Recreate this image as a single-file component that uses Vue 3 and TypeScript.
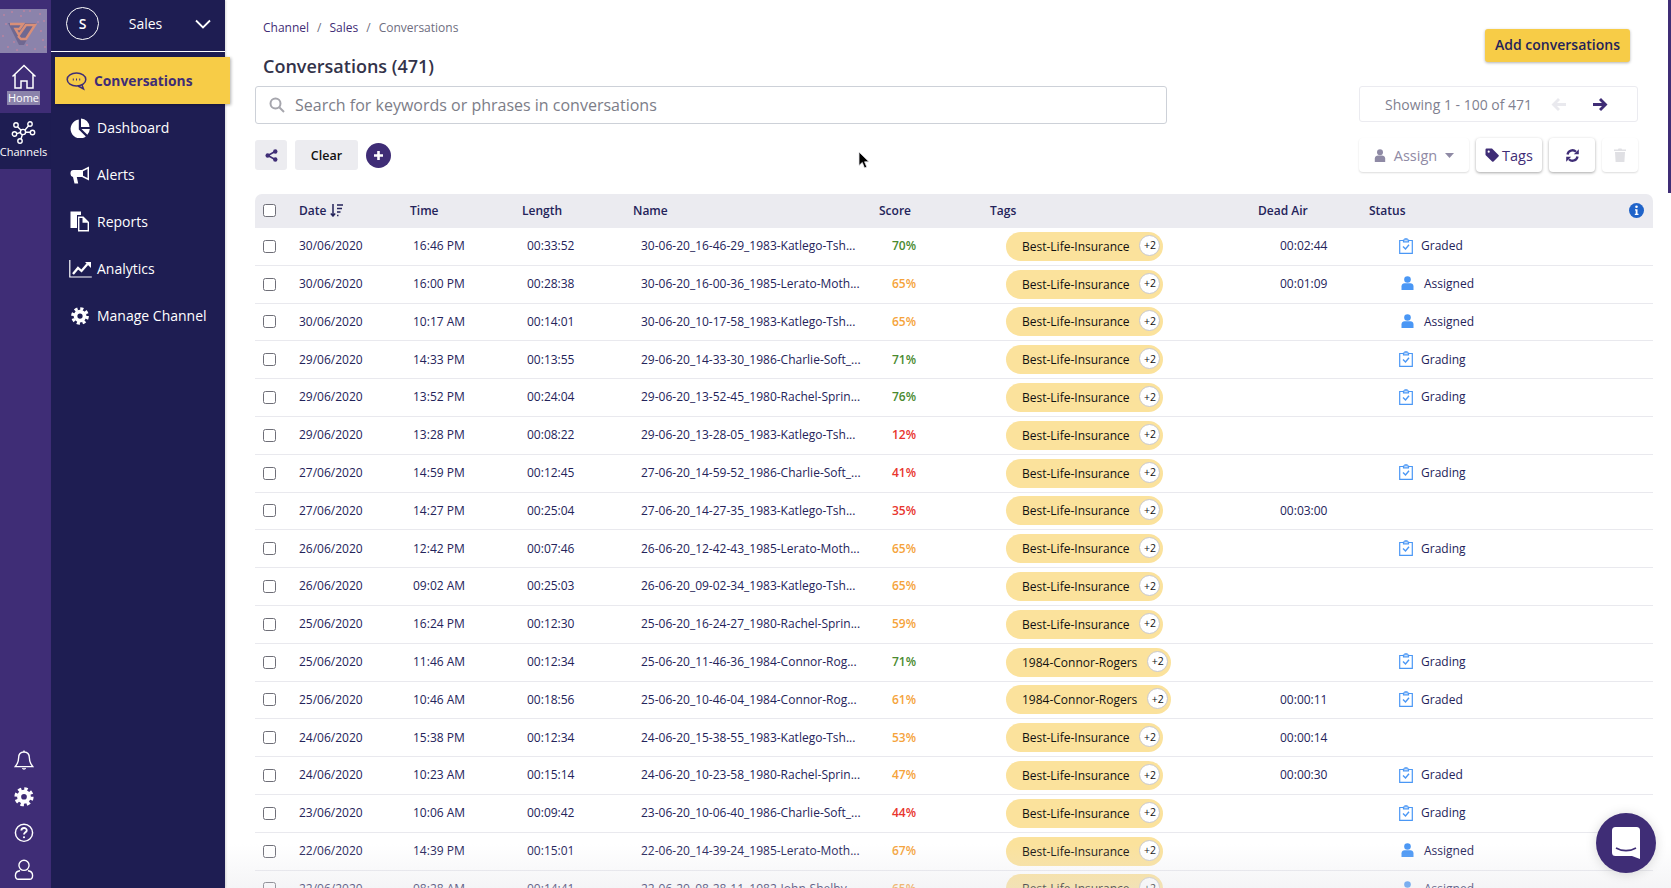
<script setup lang="ts">
type Row = {
  date: string;
  time: string;
  length: string;
  name: string;
  score: number;
  tag: string;
  air: string;
  status: string;
};

const life = "Best-Life-Insurance";
const connor = "1984-Connor-Rogers";

const rows: Row[] = [
  { date: "30/06/2020", time: "16:46 PM", length: "00:33:52", name: "30-06-20_16-46-29_1983-Katlego-Tsh...", score: 70, tag: life, air: "00:02:44", status: "Graded" },
  { date: "30/06/2020", time: "16:00 PM", length: "00:28:38", name: "30-06-20_16-00-36_1985-Lerato-Moth...", score: 65, tag: life, air: "00:01:09", status: "Assigned" },
  { date: "30/06/2020", time: "10:17 AM", length: "00:14:01", name: "30-06-20_10-17-58_1983-Katlego-Tsh...", score: 65, tag: life, air: "", status: "Assigned" },
  { date: "29/06/2020", time: "14:33 PM", length: "00:13:55", name: "29-06-20_14-33-30_1986-Charlie-Soft_...", score: 71, tag: life, air: "", status: "Grading" },
  { date: "29/06/2020", time: "13:52 PM", length: "00:24:04", name: "29-06-20_13-52-45_1980-Rachel-Sprin...", score: 76, tag: life, air: "", status: "Grading" },
  { date: "29/06/2020", time: "13:28 PM", length: "00:08:22", name: "29-06-20_13-28-05_1983-Katlego-Tsh...", score: 12, tag: life, air: "", status: "" },
  { date: "27/06/2020", time: "14:59 PM", length: "00:12:45", name: "27-06-20_14-59-52_1986-Charlie-Soft_...", score: 41, tag: life, air: "", status: "Grading" },
  { date: "27/06/2020", time: "14:27 PM", length: "00:25:04", name: "27-06-20_14-27-35_1983-Katlego-Tsh...", score: 35, tag: life, air: "00:03:00", status: "" },
  { date: "26/06/2020", time: "12:42 PM", length: "00:07:46", name: "26-06-20_12-42-43_1985-Lerato-Moth...", score: 65, tag: life, air: "", status: "Grading" },
  { date: "26/06/2020", time: "09:02 AM", length: "00:25:03", name: "26-06-20_09-02-34_1983-Katlego-Tsh...", score: 65, tag: life, air: "", status: "" },
  { date: "25/06/2020", time: "16:24 PM", length: "00:12:30", name: "25-06-20_16-24-27_1980-Rachel-Sprin...", score: 59, tag: life, air: "", status: "" },
  { date: "25/06/2020", time: "11:46 AM", length: "00:12:34", name: "25-06-20_11-46-36_1984-Connor-Rog...", score: 71, tag: connor, air: "", status: "Grading" },
  { date: "25/06/2020", time: "10:46 AM", length: "00:18:56", name: "25-06-20_10-46-04_1984-Connor-Rog...", score: 61, tag: connor, air: "00:00:11", status: "Graded" },
  { date: "24/06/2020", time: "15:38 PM", length: "00:12:34", name: "24-06-20_15-38-55_1983-Katlego-Tsh...", score: 53, tag: life, air: "00:00:14", status: "" },
  { date: "24/06/2020", time: "10:23 AM", length: "00:15:14", name: "24-06-20_10-23-58_1980-Rachel-Sprin...", score: 47, tag: life, air: "00:00:30", status: "Graded" },
  { date: "23/06/2020", time: "10:06 AM", length: "00:09:42", name: "23-06-20_10-06-40_1986-Charlie-Soft_...", score: 44, tag: life, air: "", status: "Grading" },
  { date: "22/06/2020", time: "14:39 PM", length: "00:15:01", name: "22-06-20_14-39-24_1985-Lerato-Moth...", score: 67, tag: life, air: "", status: "Assigned" },
  { date: "22/06/2020", time: "08:28 AM", length: "00:14:41", name: "22-06-20_08-28-11_1982-John-Shelby...", score: 65, tag: life, air: "", status: "Assigned" },
];

const scoreClass = (score: number) => {
  if (score >= 70) return "good";
  if (score >= 45) return "mid";
  return "bad";
};

const navItems = ["Dashboard", "Alerts", "Reports", "Analytics", "Manage Channel"];

// the logo in the picture is speckled, a handful of dots is enough
const logoDots = [
  [4, 6], [12, 3], [21, 7], [30, 2], [40, 5], [44, 12], [6, 15], [3, 27], [8, 38],
  [17, 41], [27, 36], [35, 40], [43, 31], [41, 22], [14, 33], [38, 13], [24, 2], [45, 38],
];
</script>

<template>
  <div class="page">
    <aside class="rail">
      <div class="logo">
        <svg width="47" height="44" viewBox="0 0 47 44" fill="none">
          <circle v-for="(dot, i) in logoDots" :key="i" :cx="dot[0]" :cy="dot[1]" r="0.8" fill="#d9859a" />
          <path d="M8 14h28L24 36h-5Z" fill="#6f6891" />
          <path d="M10 15h13l-3.500 5h-4l3.500 6 7-10h9l-9 14h-5l-3-3" stroke="#d98f78" stroke-width="2.400" />
        </svg>
      </div>
      <div class="tab">
        <svg width="26" height="26" viewBox="0 0 26 26" fill="none" stroke="#fff" stroke-width="1.500">
          <path d="M1.500 12.500 13 1.500l11.500 11M4 10.500v13.500h6v-7h6v7h6V10.500" />
        </svg>
        <span class="home-label">Home</span>
      </div>
      <div class="tab active">
        <svg width="25" height="23" viewBox="0 0 25 23" fill="none" stroke="#fff" stroke-width="1.400">
          <circle cx="12" cy="11" r="2.600" />
          <circle cx="5" cy="4" r="2.200" />
          <circle cx="3.500" cy="13" r="2.200" />
          <circle cx="9" cy="20" r="2.200" />
          <circle cx="19" cy="3" r="2.200" />
          <circle cx="21.500" cy="11.500" r="2.200" />
          <path d="m6.500 5.700 3.600 3.500M5.700 12.700l3.700-1.200M10 18l1.300-4.300M14 9l3.600-4.300M14.600 11.200h4.700" />
        </svg>
        <span>Channels</span>
      </div>
      <div class="rail-bottom">
        <svg width="20" height="22" viewBox="0 0 20 22" fill="none" stroke="#fff" stroke-width="1.400">
          <path d="M10 2c-3.500 0-5.500 2.500-5.500 6 0 5-2 7-3.500 9h18c-1.500-2-3.500-4-3.500-9 0-3.500-2-6-5.500-6Z" />
          <path d="M8.500 18.500a1.600 1.600 0 0 0 3 0M10 .5V2" />
        </svg>
        <svg width="20" height="20" viewBox="0 0 24 24" fill="none" stroke="#fff">
          <circle cx="12" cy="12" r="6" stroke-width="5" />
          <circle cx="12" cy="12" r="9.800" stroke-width="4" stroke-dasharray="4.200 3.500" />
        </svg>
        <svg width="20" height="20" viewBox="0 0 20 20" fill="none" stroke="#fff" stroke-width="1.500">
          <circle cx="10" cy="10" r="8.800" />
          <path d="M7.300 7.800c0-3.500 5.500-3.500 5.500-.2 0 2-2.800 2-2.800 4.200" stroke-width="1.900" />
          <circle cx="10" cy="14.600" r="1.100" fill="#fff" stroke="none" />
        </svg>
        <svg width="20" height="22" viewBox="0 0 20 22" fill="none" stroke="#fff" stroke-width="1.400">
          <circle cx="10" cy="6.500" r="5.200" />
          <path d="M6 12c-3 .3-4.800 2.200-4.800 4.800 0 2.400 1 3.900 3 3.900h11.600c2 0 3-1.500 3-3.900 0-2.600-1.800-4.500-4.800-4.800" />
        </svg>
      </div>
    </aside>

    <nav class="sidenav">
      <div class="channel">
        <span class="avatar">S</span>
        <span class="channel-name">Sales</span>
        <svg width="16" height="10" viewBox="0 0 16 10" fill="none" stroke="#fff" stroke-width="1.800">
          <path d="m1 1.500 7 7 7-7" />
        </svg>
      </div>
      <div class="nav-active">
        <svg width="21" height="21" viewBox="0 0 21 21" fill="none" stroke="#3f2d76" stroke-width="1.500">
          <ellipse cx="10.500" cy="9.500" rx="9.300" ry="6.500" />
          <path d="m12 16 5.500 3-1.500-4" />
          <path d="M6.800 9.500h1M10 9.500h1M13.200 9.500h1" stroke-width="2" />
        </svg>
        <span>Conversations</span>
      </div>
      <div v-for="item in navItems" :key="item" class="nav-item">
        <span class="nav-icon">
          <svg v-if="item === 'Dashboard'" width="20" height="20" viewBox="0 0 20 20" fill="#fff">
            <path d="M8.800 1.500v10l7 7A9.500 9.500 0 1 1 8.800 1.500Z" />
            <path d="M11 .5A9 9 0 0 1 19.500 9H11Z" />
            <path d="M11.500 11H19.800a9 9 0 0 1-2.500 5.700Z" />
          </svg>
          <svg v-else-if="item === 'Alerts'" width="21" height="18" viewBox="0 0 21 18" fill="#fff">
            <path fill-rule="evenodd" d="M19 .5 12 4H3.500A3 3 0 0 0 .5 7v1A3 3 0 0 0 3 11l1.500 6.500h3.700L6.800 11H12l7 3.500v-14Zm-1.500 2.400v9.200L13 9.800V5.200Z" />
          </svg>
          <svg v-else-if="item === 'Reports'" width="20" height="21" viewBox="0 0 20 21" fill="#fff">
            <path d="M.5.5H11V4H7v13H.5Z" />
            <path d="M8 5.500h5.500L19 11v9.500H8Zm1.400 1.400v12.200h8.200v-7.400h-5.100V6.900Z" fill-rule="evenodd" />
          </svg>
          <svg v-else-if="item === 'Analytics'" width="23" height="18" viewBox="0 0 23 18" fill="none" stroke="#fff">
            <path d="M.8 0v17h22" stroke-width="1.200" />
            <path d="m4 14 5-6 3.500 3 6-7" stroke-width="2.300" />
            <path d="M16 2h6v6Z" fill="#fff" stroke="none" />
          </svg>
          <svg v-else width="18" height="18" viewBox="0 0 24 24" fill="none" stroke="#fff">
            <circle cx="12" cy="12" r="6" stroke-width="5" />
            <circle cx="12" cy="12" r="9.800" stroke-width="4" stroke-dasharray="4.200 3.500" />
          </svg>
        </span>
        <span>{{ item }}</span>
      </div>
    </nav>

    <main class="main">
      <div class="top">
        <div class="heading">
          <div class="crumbs">
            <span>Channel</span><i>/</i><span>Sales</span><i>/</i><em>Conversations</em>
          </div>
          <h1>Conversations (471)</h1>
        </div>
        <button class="add" type="button">Add conversations</button>
      </div>

      <div class="search-row">
        <div class="search">
          <svg width="16" height="16" viewBox="0 0 16 16" fill="none" stroke="#a6a6ad" stroke-width="2">
            <circle cx="6.500" cy="6.500" r="5" />
            <path d="m10.500 10.500 4.500 4.500" />
          </svg>
          <span>Search for keywords or phrases in conversations</span>
        </div>
        <div class="pager">
          <span>Showing 1 - 100 of 471</span>
          <svg width="15" height="13" viewBox="0 0 15 13" fill="#e9e9ee">
            <path d="M7 0 .5 6.500 7 13l2-2-3-3h9V5H6l3-3Z" />
          </svg>
          <svg width="15" height="13" viewBox="0 0 15 13" fill="#3f2d76">
            <path d="m8 0 6.500 6.500L8 13l-2-2 3-3H0V5h9L6 2Z" />
          </svg>
        </div>
      </div>

      <div class="actions">
        <button class="soft square" type="button">
          <svg width="13" height="13" viewBox="0 0 13 13" fill="#3f2d76" stroke="#3f2d76">
            <path d="m3 6.500 7-4M3 6.500l7 4" stroke-width="1.500" />
            <circle cx="2.700" cy="6.500" r="2.200" stroke="none" />
            <circle cx="10.300" cy="2.500" r="2.200" stroke="none" />
            <circle cx="10.300" cy="10.500" r="2.200" stroke="none" />
          </svg>
        </button>
        <button class="soft clear" type="button">Clear</button>
        <button class="plus" type="button">
          <svg width="11" height="11" viewBox="0 0 11 11" stroke="#fff" stroke-width="2.600">
            <path d="M5.500 1v9M1 5.500h9" />
          </svg>
        </button>
        <div class="tools">
          <button class="tool muted assign" type="button">
            <svg width="12" height="13" viewBox="0 0 12 13" fill="#8f8aa5">
              <circle cx="6" cy="3.300" r="3" />
              <path d="M.8 13V9.500C.8 7.500 2.500 6.500 4 6.500h4c1.500 0 3.200 1 3.200 3V13Z" />
            </svg>
            <span>Assign</span>
            <svg width="9" height="5" viewBox="0 0 9 5" fill="#8f8aa5"><path d="M0 0h9L4.500 5Z" /></svg>
          </button>
          <button class="tool tags" type="button">
            <svg width="14" height="14" viewBox="0 0 14 14" fill="#3f2d76">
              <path d="M.5 1.500a1 1 0 0 1 1-1H7L13.500 7a1 1 0 0 1 0 1.400l-5 5a1 1 0 0 1-1.400 0L.5 7Z" />
              <circle cx="3.700" cy="3.700" r="1.100" fill="#fff" />
            </svg>
            <span>Tags</span>
          </button>
          <button class="tool refresh" type="button">
            <svg width="13" height="13" viewBox="0 0 13 13" fill="none" stroke="#3f2d76" stroke-width="2.300">
              <path d="M1.500 5.500A5 5 0 0 1 10 2.800" />
              <path d="M11.500 7.500A5 5 0 0 1 3 10.200" />
              <path d="M12.800.3v5H7.800ZM.2 12.700v-5h5Z" fill="#3f2d76" stroke="none" />
            </svg>
          </button>
          <button class="tool muted trash" type="button">
            <svg width="12" height="14" viewBox="0 0 12 14" fill="#e0e0e4">
              <path d="M0 1.500h4L4.500.5h3l.5 1h4V3H0ZM1 4h10l-.6 10H1.600Z" />
            </svg>
          </button>
        </div>
      </div>

      <div class="grid head">
        <span class="check"><input type="checkbox" /></span>
        <span class="date-head">Date
          <svg width="13" height="13" viewBox="0 0 13 13" fill="none" stroke="#24235a" stroke-width="1.500">
            <path d="M3 0v12M.8 9.500 3 12l2.200-2.500M7 1h6M7 4.500h5M7 8h3.500M7 11.500h1.500" />
          </svg>
        </span>
        <span>Time</span>
        <span>Length</span>
        <span>Name</span>
        <span>Score</span>
        <span>Tags</span>
        <span>Dead Air</span>
        <span class="status-head">
          Status
          <svg width="15" height="15" viewBox="0 0 15 15">
            <circle cx="7.500" cy="7.500" r="7.500" fill="#1f63c9" />
            <circle cx="7.500" cy="3.800" r="1.300" fill="#fff" />
            <path d="M6 6.200h2.500v4.600h1v1.300H5.800v-1.300h.9V7.500H6Z" fill="#fff" />
          </svg>
        </span>
      </div>

      <div v-for="row in rows" :key="row.name" class="grid row">
        <span class="check"><input type="checkbox" /></span>
        <span>{{ row.date }}</span>
        <span class="c-time">{{ row.time }}</span>
        <span class="c-length">{{ row.length }}</span>
        <span class="c-name">{{ row.name }}</span>
        <span class="c-score" :class="scoreClass(row.score)">{{ row.score }}%</span>
        <span class="c-tag">
          <span class="pill">
            <span>{{ row.tag }}</span>
            <b>+2</b>
          </span>
        </span>
        <span class="c-air">{{ row.air }}</span>
        <span class="c-status">
          <template v-if="row.status === 'Assigned'">
            <svg class="assigned-icon" width="13" height="14" viewBox="0 0 13 14" fill="#4a97f5">
              <circle cx="6.500" cy="3.500" r="3.300" />
              <path d="M.5 14v-3.500C.5 8.300 2 7.300 3.500 7.300h6c1.500 0 3 1 3 3.200V14Z" />
            </svg>
            <span>Assigned</span>
          </template>
          <template v-else-if="row.status">
            <svg class="grade-icon" width="14" height="16" viewBox="0 0 14 16" fill="none" stroke="#4a97f5" stroke-width="1.200">
              <path d="M4 2.500H.7v12.800h12.600V2.500H10" />
              <path d="M4.500 3.800V2H6V.8h2V2h1.500v1.800Z" />
              <path d="m4 8.500 2.500 2.500L10 6.800" stroke-width="1.400" />
            </svg>
            <span>{{ row.status }}</span>
          </template>
        </span>
      </div>

      <div class="fade"></div>
      <div class="thumb"></div>
      <svg class="cursor" width="14" height="18" viewBox="0 0 14 18">
        <path d="M1 0v13.500l3.300-3 2.200 5.500 2.300-1-2.200-5.200H11Z" fill="#000" stroke="#e6e6ea" stroke-width=".8" />
      </svg>
      <div class="chat">
        <svg width="28" height="32" viewBox="0 0 28 32">
          <path d="M3.500 0h21A3.500 3.500 0 0 1 28 3.500V32l-8-3H3.500A3.500 3.500 0 0 1 0 25.500v-22A3.500 3.500 0 0 1 3.500 0Z" fill="#fff" />
          <path d="M4 21c6 3.500 14 3.500 20 0" fill="none" stroke="#3f2d76" stroke-width="1.600" />
        </svg>
      </div>
    </main>
  </div>
</template>

<style scoped>
.page {
  display: flex;
  height: 888px;
  overflow: hidden;
  font-family: "Open Sans", "Liberation Sans", sans-serif;
  color: #24235a;
}

.rail {
  width: 51px;
  flex: none;
  background: #3f2d76;
  color: #fff;
  display: flex;
  flex-direction: column;
  align-items: center;
  padding-top: 9px;
  box-sizing: border-box;
}

.logo {
  width: 47px;
  height: 44px;
  align-self: flex-start;
  background: #8b83ab;
}

.logo svg {
  display: block;
}

.tab {
  width: 100%;
  height: 60px;
  display: flex;
  flex-direction: column;
  align-items: center;
  justify-content: flex-end;
  font-size: 11px;
  line-height: 14px;
  padding: 0 4px 8px 0;
  box-sizing: border-box;
}

.tab.active {
  height: 56px;
  background: #1e1d52;
  padding-bottom: 10px;
  gap: 1px;
}

.home-label {
  background: #8b83ab;
  padding: 0 1px;
  margin-top: 1px;
}

.rail-bottom {
  margin-top: auto;
  height: 130px;
  display: flex;
  flex-direction: column;
  align-items: center;
  gap: 16px;
  padding: 0 4px 8px 0;
  box-sizing: content-box;
}

.sidenav {
  width: 174px;
  flex: none;
  background: #1e1d52;
  color: #fff;
  box-shadow: 1px 0 2px rgba(0, 0, 0, 0.15);
  z-index: 2;
}

.channel {
  height: 52px;
  border-bottom: 1px solid #fff;
  box-sizing: border-box;
  display: flex;
  align-items: center;
  padding: 0 14px 4px 15px;
}

.avatar {
  width: 33px;
  height: 33px;
  border: 1.5px solid #fff;
  border-radius: 50%;
  box-sizing: border-box;
  display: flex;
  align-items: center;
  justify-content: center;
  font-size: 14px;
  font-weight: 600;
}

.channel-name {
  flex: 1;
  text-align: center;
  font-size: 14px;
  padding-right: 3px;
}

.nav-active {
  width: 175px;
  height: 47px;
  margin: 5px 0 0 4px;
  background: #f7cc47;
  color: #3f2d76;
  font-size: 13.800px;
  font-weight: 700;
  display: flex;
  align-items: center;
  gap: 7px;
  padding-left: 11px;
  box-sizing: border-box;
  box-shadow: 1px 1px 3px rgba(0, 0, 0, 0.3);
  position: relative;
}

.nav-item {
  height: 47px;
  display: flex;
  align-items: center;
  font-size: 14px;
  padding-left: 17px;
}

.nav-icon {
  width: 24px;
  display: flex;
  justify-content: center;
  margin-right: 5px;
}

.main {
  flex: 1;
  min-width: 0;
  padding: 0 18px 0 30px;
  position: relative;
  background: #fff;
}

.top {
  height: 86px;
  display: flex;
  justify-content: space-between;
  align-items: flex-start;
}

.heading {
  padding: 19px 0 0 8px;
}

.crumbs {
  font-size: 12px;
  line-height: 18px;
  color: #3f2d76;
  display: flex;
}

.crumbs i {
  font-style: normal;
  margin: 0 8px;
  color: #6e6e80;
}

.crumbs em {
  font-style: normal;
  color: #6e6e80;
}

h1 {
  margin: 16px 0 0;
  font-size: 18px;
  line-height: 26px;
  font-weight: 600;
  color: #33334a;
}

button {
  font-family: inherit;
  border: none;
  cursor: pointer;
  padding: 0;
}

.add {
  width: 145px;
  height: 33px;
  margin: 29px 23px 0 0;
  padding-bottom: 2px;
  background: #f7cc47;
  color: #24235a;
  font-size: 14px;
  font-weight: 600;
  border-radius: 3px;
  box-shadow: 0 1px 3px rgba(0, 0, 0, 0.3);
}

.search-row {
  display: flex;
  justify-content: space-between;
  align-items: flex-start;
  padding-right: 15px;
}

.search {
  width: 912px;
  height: 38px;
  border: 1px solid #cdd1d8;
  border-radius: 3px;
  box-sizing: border-box;
  display: flex;
  align-items: center;
  gap: 10px;
  padding-left: 13px;
  font-size: 16px;
  color: #7c7d88;
}

.pager {
  width: 279px;
  height: 36px;
  border: 1px solid #ebebf0;
  border-radius: 3px;
  box-sizing: border-box;
  display: flex;
  align-items: center;
  padding-left: 25px;
  font-size: 14px;
  color: #7f7f90;
}

.pager svg:first-of-type {
  margin-left: 19px;
}

.pager svg:last-of-type {
  margin-left: 27px;
}

.actions {
  display: flex;
  align-items: center;
  margin-top: 14px;
  height: 34px;
  padding-right: 15px;
}

.soft {
  height: 30px;
  background: #ececf0;
  border-radius: 3px;
  color: #111;
  font-size: 12.500px;
  font-weight: 600;
  display: flex;
  align-items: center;
  justify-content: center;
}

.square {
  width: 32px;
}

.clear {
  width: 63px;
  margin-left: 8px;
}

.plus {
  width: 25px;
  height: 25px;
  border-radius: 50%;
  background: #3f2d76;
  margin-left: 8px;
  display: flex;
  align-items: center;
  justify-content: center;
}

.tools {
  margin-left: auto;
  display: flex;
  gap: 7px;
}

.tool {
  height: 34px;
  background: #fff;
  border-radius: 4px;
  box-shadow: 0 1px 3px rgba(0, 0, 0, 0.35);
  color: #3f2d76;
  font-size: 14.500px;
  display: flex;
  align-items: center;
  justify-content: center;
}

.tool.muted {
  box-shadow: 0 1px 2px rgba(0, 0, 0, 0.14);
  color: #8f8aa5;
}

.assign {
  width: 110px;
  gap: 8px;
}

.tags {
  width: 66px;
  gap: 3px;
}

.refresh {
  width: 46px;
}

.trash {
  width: 36px;
}

.grid {
  display: grid;
  grid-template-columns: 44px 111px 112px 111px 246px 111px 268px 111px 1fr;
  align-items: center;
}

.head {
  margin-top: 22px;
  height: 34px;
  padding-bottom: 2px;
  box-sizing: border-box;
  background: #ebebf0;
  border-radius: 7px 7px 0 0;
  font-size: 12px;
  font-weight: 600;
}

.date-head {
  display: flex;
  align-items: center;
  gap: 4px;
}

.status-head {
  display: flex;
  justify-content: space-between;
  align-items: center;
  padding-right: 9px;
}

.row {
  height: 37.800px;
  box-sizing: border-box;
  border-bottom: 1px solid #e9e9ee;
  padding-bottom: 1.500px;
  font-size: 12px;
}

.row .check {
  margin-top: 1.500px;
}

.check {
  display: flex;
  padding-left: 8px;
}

input[type="checkbox"] {
  appearance: none;
  width: 13px;
  height: 13px;
  margin: 0;
  border: 1px solid #6f6f78;
  border-radius: 2.500px;
  background: #fff;
}

.c-time {
  padding-left: 3px;
}

.c-length {
  padding-left: 5px;
}

.c-name {
  padding-left: 8px;
  white-space: nowrap;
}

.c-score {
  padding-left: 13px;
  font-weight: 600;
}

.good {
  color: #4a8a2f;
}

.mid {
  color: #f5a33b;
}

.bad {
  color: #e8352e;
}

.c-tag {
  padding-left: 16px;
  display: flex;
  margin-top: 1.500px;
}

.pill {
  height: 29px;
  padding: 0 3px 0 16px;
  background: #fbe29c;
  border-radius: 15px;
  display: flex;
  align-items: center;
  gap: 10px;
  color: #111;
  font-size: 12px;
}

.pill b {
  width: 21px;
  height: 21px;
  margin-top: -2px;
  border-radius: 50%;
  background: #fff;
  border: 1px solid #c9c9cf;
  box-sizing: border-box;
  display: flex;
  align-items: center;
  justify-content: center;
  font-size: 10.500px;
  font-weight: 400;
}

.c-air {
  padding-left: 22px;
}

.c-status {
  padding-left: 30px;
  display: flex;
  align-items: center;
}

.grade-icon {
  margin-right: 8px;
}

.assigned-icon {
  margin: 0 10px 0 2px;
}

.fade {
  position: absolute;
  left: 0;
  right: 0;
  bottom: 0;
  height: 44px;
  background: linear-gradient(rgba(225, 225, 230, 0), rgba(225, 225, 230, 0.35));
  pointer-events: none;
}

.thumb {
  position: absolute;
  top: 0;
  right: 0;
  width: 3px;
  height: 193px;
  background: #3f2d76;
}

.cursor {
  position: absolute;
  left: 633px;
  top: 152px;
}

.chat {
  position: absolute;
  left: 1371px;
  top: 813px;
  width: 60px;
  height: 60px;
  border-radius: 50%;
  background: #3f2d76;
  box-shadow: 0 1px 12px rgba(0, 0, 0, 0.15);
  display: flex;
  align-items: center;
  justify-content: center;
}
</style>

<style>
html,
body {
  margin: 0;
  background: #fff;
}
</style>
